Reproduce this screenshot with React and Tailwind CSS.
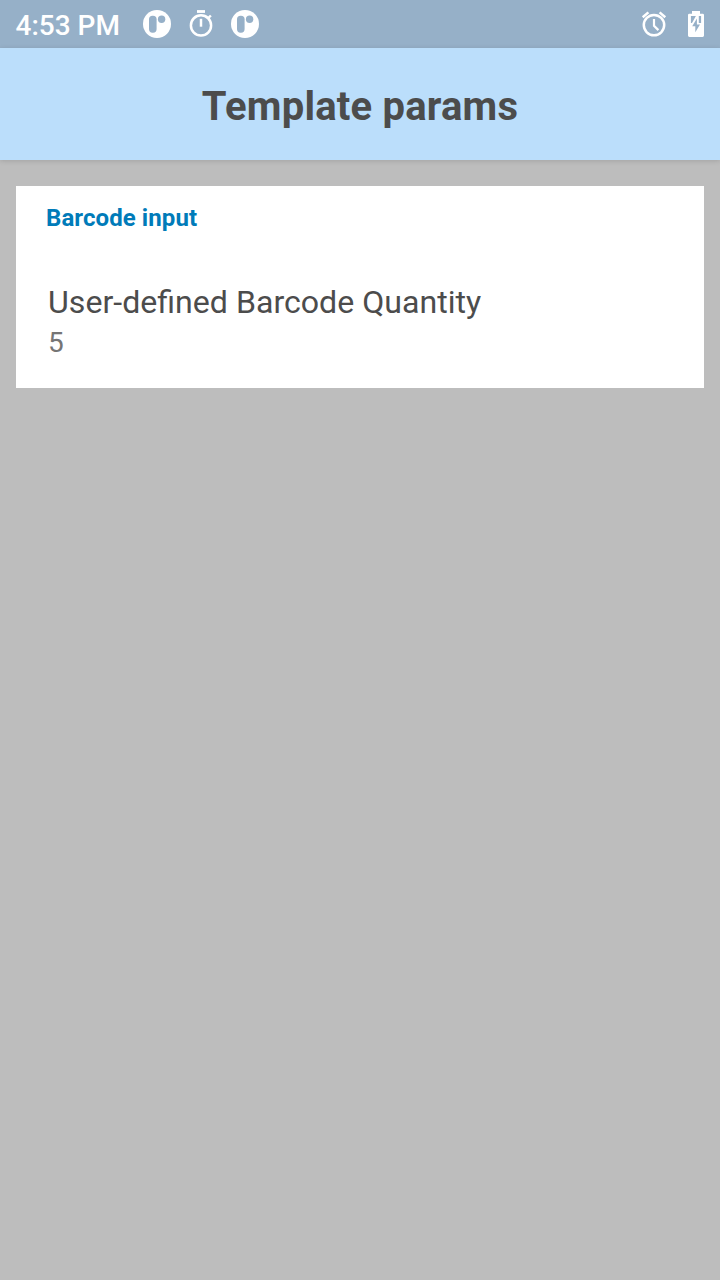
function AppBadgeIcon() {
  return (
    <svg className="size-7" viewBox="0 0 28 28" aria-hidden="true">
      <circle cx="14" cy="14" r="14" fill="#fff" />
      <rect x="6" y="5.7" width="7.6" height="17" rx="3.6" fill="#96b0c8" />
      <circle cx="18.6" cy="9.2" r="3.7" fill="#96b0c8" />
    </svg>
  );
}

function TimerIcon() {
  return (
    <svg className="size-8" viewBox="0 0 32 32" fill="none" stroke="#fff" aria-hidden="true">
      <circle cx="16" cy="17.4" r="10.1" strokeWidth="2.5" />
      <path d="M12 3.5h8" strokeWidth="2.8" />
      <path d="M16 10.8v7.9" strokeWidth="2.5" />
      <path d="M23.2 10.2l2.7-2.7" strokeWidth="2.4" />
    </svg>
  );
}

function AlarmIcon() {
  return (
    <svg className="size-7" viewBox="0 0 28 28" fill="none" stroke="#fff" aria-hidden="true">
      <circle cx="14" cy="15.1" r="10.2" strokeWidth="2.5" />
      <path d="M2.7 7.2l5.7-4.8M25.3 7.2l-5.7-4.8" strokeWidth="2.5" />
      <path d="M14 9v6.7l4.4 4.4" strokeWidth="2.2" />
    </svg>
  );
}

function BatteryIcon() {
  return (
    <svg className="h-[26px] w-4" viewBox="0 0 16 26" aria-hidden="true">
      <path d="M4 0h8v2.7h2.6q1.4 0 1.4 1.4v20.5q0 1.4-1.4 1.4H1.4Q0 26 0 24.6V4.1q0-1.4 1.4-1.4H4z" fill="#fff" />
      <path d="M2.9 5.1h5L4 12H2.9zM10.8 5.1h2.3V12h-2.3z" fill="#96b0c8" />
      <path d="M8.9 7.5L4.2 15.2h3.1v6l4.7-7.8H8.9z" fill="#96b0c8" />
    </svg>
  );
}

export default function App() {
  return (
    <div className="flex min-h-screen w-full flex-col bg-[#bdbdbd] font-['Roboto',sans-serif] text-[#4c4c4c]">
      <div className="flex h-12 items-center justify-between bg-[#96b0c8] pr-4 pl-[15.5px] text-white">
        <div className="flex items-center">
          <span className="w-[127.5px] pt-[3px] text-[28px] leading-8 font-medium">4:53 PM</span>
          <div className="flex items-center gap-3.5">
            <AppBadgeIcon />
            <TimerIcon />
            <AppBadgeIcon />
          </div>
        </div>
        <div className="flex items-center gap-5">
          <AlarmIcon />
          <BatteryIcon />
        </div>
      </div>

      <header className="flex h-28 items-center justify-center bg-[#bbdefb] pt-1.5 shadow-[0_1px_5px_rgba(0,0,0,0.14)]">
        <h1 className="text-[40px] leading-[48px] font-bold tracking-[0.2px]">Template params</h1>
      </header>

      <main className="px-4 pt-[26px]">
        <section className="h-[202px] bg-white px-[30px] pt-[18px]">
          <h2 className="text-2xl leading-7 font-bold tracking-[0.08px] text-[#007bb9]">Barcode input</h2>
          <div className="px-0.5 pt-[50px]">
            <p className="text-[32.12px] leading-10">User-defined Barcode Quantity</p>
            <p className="mt-[5px] text-[28px] leading-8 text-[#757575]">5</p>
          </div>
        </section>
      </main>
    </div>
  );
}
